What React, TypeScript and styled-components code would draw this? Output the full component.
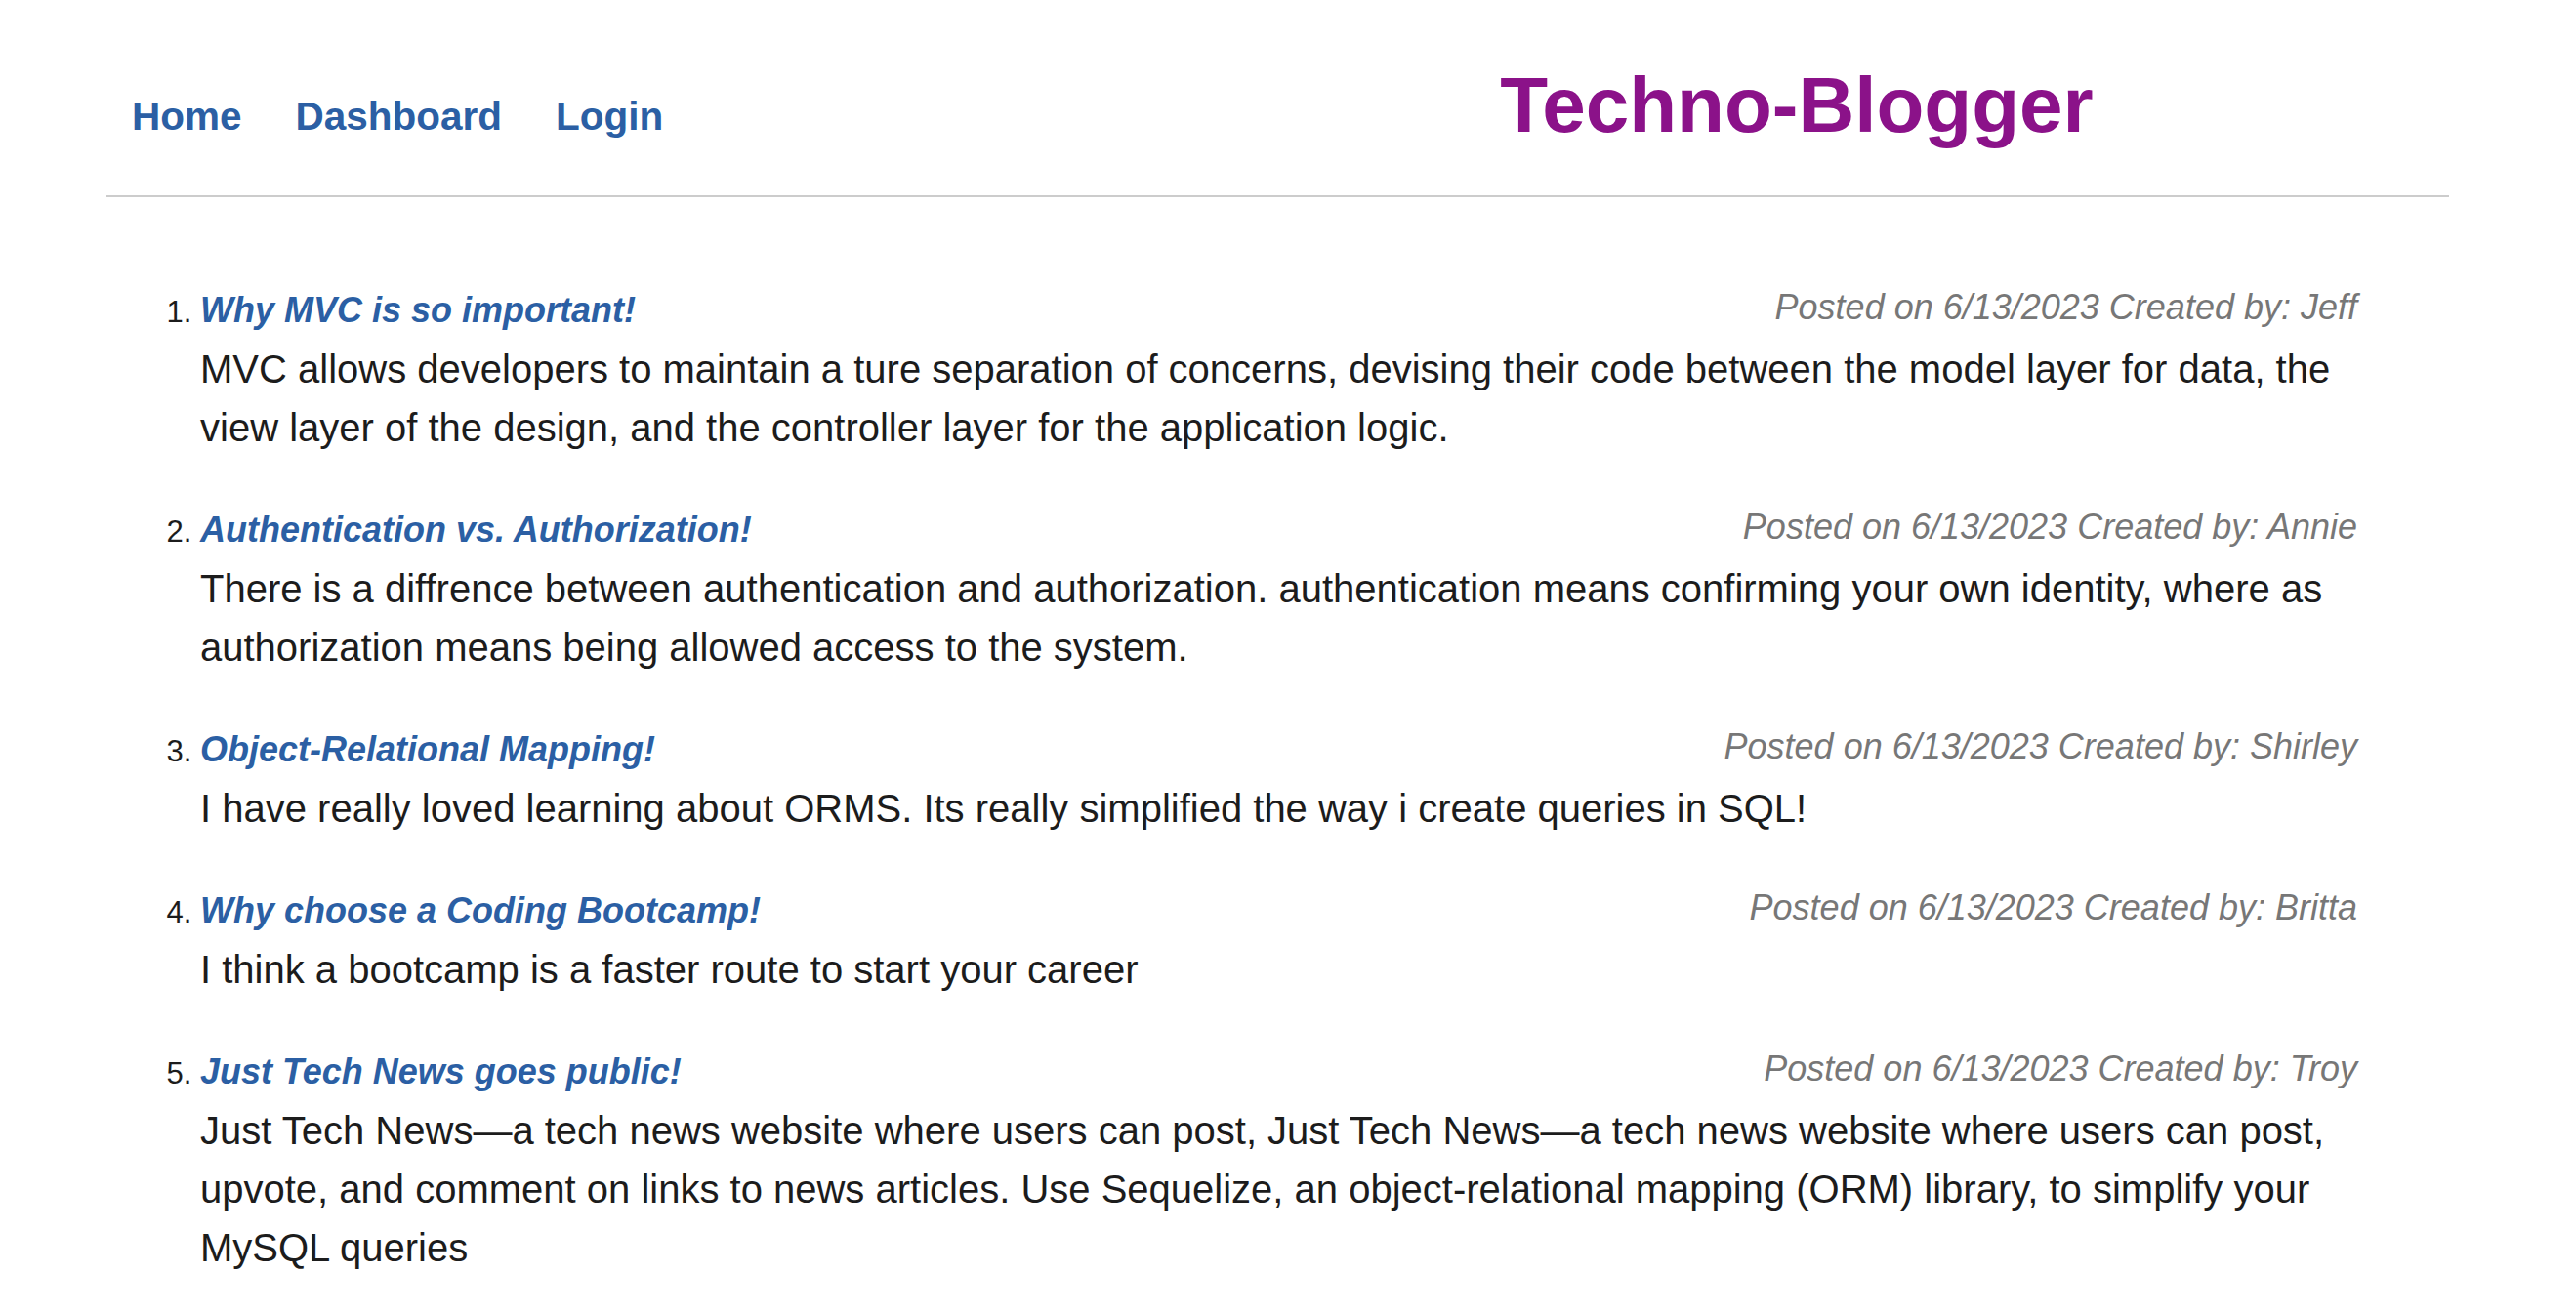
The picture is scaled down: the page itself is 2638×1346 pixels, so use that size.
import styled, { createGlobalStyle } from "styled-components";

type Post = {
  title: string;
  date: string;
  author: string;
  text: string;
};

const posts: Post[] = [
  {
    title: "Why MVC is so important!",
    date: "6/13/2023",
    author: "Jeff",
    text: "MVC allows developers to maintain a ture separation of concerns, devising their code between the model layer for data, the view layer of the design, and the controller layer for the application logic.",
  },
  {
    title: "Authentication vs. Authorization!",
    date: "6/13/2023",
    author: "Annie",
    text: "There is a diffrence between authentication and authorization. authentication means confirming your own identity, where as authorization means being allowed access to the system.",
  },
  {
    title: "Object-Relational Mapping!",
    date: "6/13/2023",
    author: "Shirley",
    text: "I have really loved learning about ORMS. Its really simplified the way i create queries in SQL!",
  },
  {
    title: "Why choose a Coding Bootcamp!",
    date: "6/13/2023",
    author: "Britta",
    text: "I think a bootcamp is a faster route to start your career",
  },
  {
    title: "Just Tech News goes public!",
    date: "6/13/2023",
    author: "Troy",
    text: "Just Tech News\u2014a tech news website where users can post, Just Tech News\u2014a tech news website where users can post, upvote, and comment on links to news articles. Use Sequelize, an object-relational mapping (ORM) library, to simplify your MySQL queries",
  },
];

const App = () => {
  return (
    <>
      <GlobalStyle />
      <Page>
        <Header>
          <Nav>
            <NavLink href="#">Home</NavLink>
            <NavLink href="#">Dashboard</NavLink>
            <NavLink href="#">Login</NavLink>
          </Nav>
          <SiteTitle>Techno-Blogger</SiteTitle>
        </Header>
        <PostList>
          {posts.map((post) => (
            <PostItem key={post.title}>
              <PostHead>
                <PostTitle href="#">{post.title}</PostTitle>
                <PostMeta>
                  Posted on {post.date} Created by: {post.author}
                </PostMeta>
              </PostHead>
              <PostText>{post.text}</PostText>
            </PostItem>
          ))}
        </PostList>
      </Page>
    </>
  );
};

export default App;

const GlobalStyle = createGlobalStyle`
  body {
    margin: 0;
    background: #ffffff;
    font-family: "Liberation Sans", Arial, Helvetica, sans-serif;
    color: #1c1c1c;
  }
`;

const Page = styled.div`
  padding: 0 130px 0 109px;
`;

const Header = styled.header`
  display: flex;
  align-items: center;
  box-sizing: border-box;
  height: 202px;
  padding: 16px 0 0 26px;
  border-bottom: 2px solid #cccccc;
`;

const Nav = styled.nav`
  display: flex;
  gap: 55px;
  margin-top: 22px;
`;

const NavLink = styled.a`
  color: #2b5fa4;
  font-size: 40.5px;
  font-weight: bold;
  text-decoration: none;
`;

const SiteTitle = styled.h1`
  margin: 0 0 0 857px;
  color: #8b1289;
  font-size: 80px;
  font-weight: bold;
`;

const PostList = styled.ol`
  margin: 86px 94px 0 0;
  padding: 0 0 0 96px;
`;

const PostItem = styled.li`
  margin-bottom: 45px;
  font-size: 31px;

  &::marker {
    color: #1c1c1c;
  }
`;

const PostHead = styled.div`
  display: flex;
  align-items: baseline;
  justify-content: space-between;
  height: 60px;
  line-height: 60px;
`;

const PostTitle = styled.a`
  color: #2b5fa4;
  font-size: 36px;
  font-weight: bold;
  font-style: italic;
  text-decoration: none;
`;

const PostMeta = styled.span`
  position: relative;
  top: -3px;
  color: #777777;
  font-size: 36px;
  font-style: italic;
`;

const PostText = styled.p`
  margin: 0;
  font-size: 40px;
  line-height: 60px;
`;
